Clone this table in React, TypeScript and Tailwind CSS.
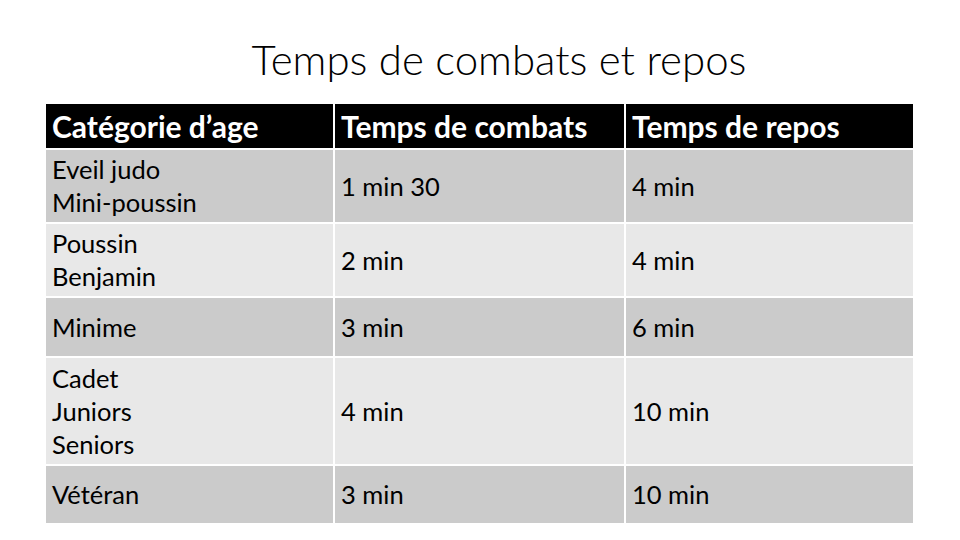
const rows = [
  { cat: ['Eveil judo', 'Mini-poussin'], combat: '1 min 30', repos: '4 min', h: 'h-[72px]', bg: 'bg-[#cbcbcb]' },
  { cat: ['Poussin', 'Benjamin'], combat: '2 min', repos: '4 min', h: 'h-[72px]', bg: 'bg-[#e8e8e8]' },
  { cat: ['Minime'], combat: '3 min', repos: '6 min', h: 'h-[58px]', bg: 'bg-[#cbcbcb]' },
  { cat: ['Cadet', 'Juniors', 'Seniors'], combat: '4 min', repos: '10 min', h: 'h-[106px]', bg: 'bg-[#e8e8e8]' },
  { cat: ['Vétéran'], combat: '3 min', repos: '10 min', h: 'h-[57px]', bg: 'bg-[#cbcbcb]' },
];

export default function App() {
  return (
    <div className="w-[960px] h-[540px] bg-white overflow-hidden" style={{ fontFamily: 'Lato, "Open Sans", sans-serif' }}>
      {/* Title */}
      <div className="h-[104px] flex justify-center pl-[38px] pt-[35px]">
        <h1 className="text-[42px] font-light leading-[48px] text-black">Temps de combats et repos</h1>
      </div>

      {/* Table */}
      <div className="ml-[46px] grid grid-cols-[287px_289px_287px] gap-[2px] text-black">
        <div className="h-[44px] bg-black text-white font-bold text-[30px] flex items-center px-[6px]">Catégorie d’age</div>
        <div className="h-[44px] bg-black text-white font-bold text-[30px] flex items-center px-[6px]">Temps de combats</div>
        <div className="h-[44px] bg-black text-white font-bold text-[30px] flex items-center px-[6px]">Temps de repos</div>

        {rows.map((r, i) => (
          <>
            <div key={`a${i}`} className={`${r.h} ${r.bg} flex flex-col justify-center px-[6px] text-[25.5px] leading-[33px]`}>
              {r.cat.map((c) => (
                <span key={c}>{c}</span>
              ))}
            </div>
            <div key={`b${i}`} className={`${r.h} ${r.bg} flex items-center px-[6px] text-[25.5px] leading-[33px]`}>{r.combat}</div>
            <div key={`c${i}`} className={`${r.h} ${r.bg} flex items-center px-[6px] text-[25.5px] leading-[33px]`}>{r.repos}</div>
          </>
        ))}
      </div>
    </div>
  );
}
